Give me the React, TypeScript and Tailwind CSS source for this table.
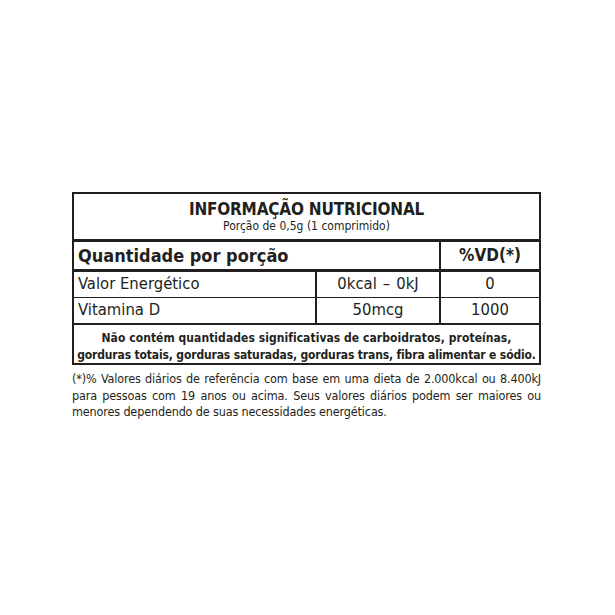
import React from "react";

const font = { fontFamily: '"DejaVu Sans Condensed", "Liberation Sans Narrow", "Liberation Sans", sans-serif' };

export default function App() {
  return (
    <div className="w-[615px] h-[615px] bg-white text-[#231f20]" style={font}>
      <div className="pt-[192px] pl-[72px]">
        <div className="w-[469px] border-2 border-[#231f20]">
          <div className="h-[48px] flex flex-col items-center justify-center border-b-[3px] border-[#231f20]">
            <div className="text-[17px] font-bold leading-[20px] tracking-[-0.2px]">INFORMAÇÃO NUTRICIONAL</div>
            <div className="text-[12px] leading-[15px]">Porção de 0,5g (1 comprimido)</div>
          </div>
          <div className="grid grid-cols-[365px_1fr] h-[30px] border-b-[3px] border-[#231f20]">
            <div className="flex items-center pl-[4px] text-[18px] font-bold">Quantidade por porção</div>
            <div className="flex items-center justify-center border-l-2 border-[#231f20] text-[17px] font-bold">%VD(*)</div>
          </div>
          <div className="grid grid-cols-[241px_124px_1fr] h-[26px] border-b border-[#231f20]">
            <div className="flex items-center pl-[4px] text-[16.5px]">Valor Energético</div>
            <div className="flex items-center justify-center gap-[6px] border-l-2 border-[#231f20] text-[16.5px]">
              <span>0kcal</span>
              <span>–</span>
              <span>0kJ</span>
            </div>
            <div className="flex items-center justify-center border-l-2 border-[#231f20] text-[16.5px]">0</div>
          </div>
          <div className="grid grid-cols-[241px_124px_1fr] h-[27px] border-b-2 border-[#231f20]">
            <div className="flex items-center pl-[4px] text-[16.5px]">Vitamina D</div>
            <div className="flex items-center justify-center border-l-2 border-[#231f20] text-[16.5px]">50mcg</div>
            <div className="flex items-center justify-center border-l-2 border-[#231f20] text-[16.5px]">1000</div>
          </div>
          <div className="h-[38px] pt-[5px] flex flex-col items-center justify-center text-[12px] font-bold leading-[17px] whitespace-nowrap">
            <div className="tracking-[0.05px]">Não contém quantidades significativas de carboidratos, proteínas,</div>
            <div className="tracking-[-0.15px]">gorduras totais, gorduras saturadas, gorduras trans, fibra alimentar e sódio.</div>
          </div>
        </div>
        <div className="w-[469px] mt-[6px] text-[12.5px] leading-[16.5px] tracking-[-0.15px] text-justify [text-align-last:left]">
          (*)% Valores diários de referência com base em uma dieta de 2.000kcal ou 8.400kJ para pessoas com 19 anos ou acima. Seus valores diários podem ser maiores ou menores dependendo de suas necessidades energéticas.
        </div>
      </div>
    </div>
  );
}
